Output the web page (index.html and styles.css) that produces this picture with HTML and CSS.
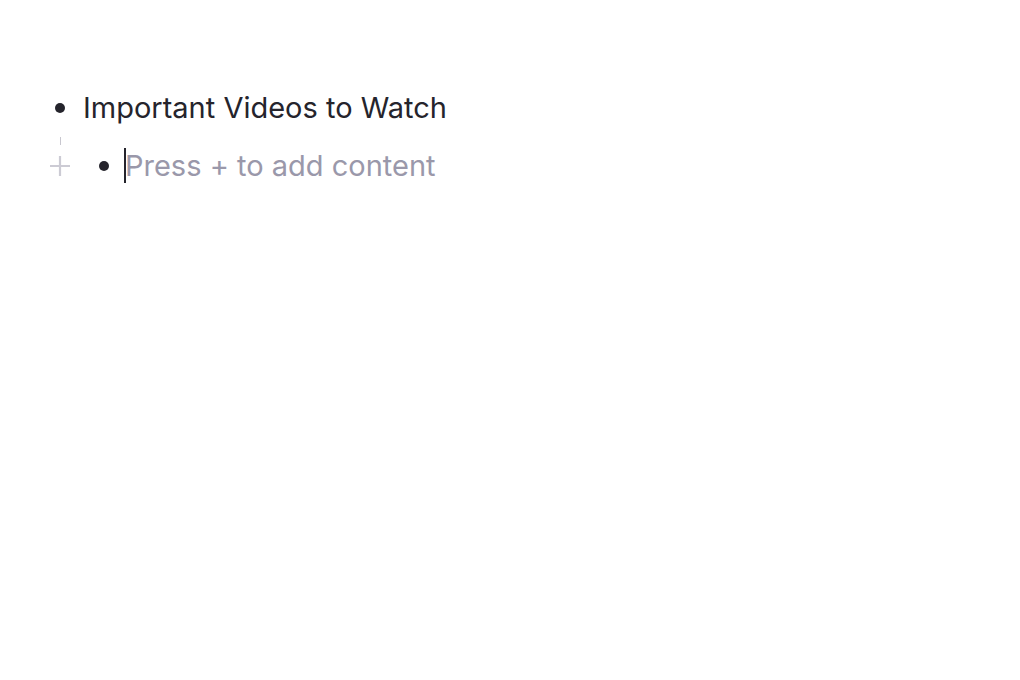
FILE: index.html
```html
<!DOCTYPE html>
<html>
<head>
<meta charset="utf-8">
<link rel="stylesheet" href="styles.css">
</head>
<body>
<div class="editor">
  <div class="row">
    <span class="bullet"></span>
    <span class="text">Important Videos to Watch</span>
  </div>
  <div class="row child">
    <div class="handle">
      <span class="tick"></span>
      <svg class="plus" width="22" height="22" viewBox="0 0 22 22"><path d="M11 1v20M1 11h20" stroke="#cccbd4" stroke-width="2.2" fill="none"/></svg>
      <span class="tick"></span>
    </div>
    <span class="bullet"></span>
    <span class="text placeholder"><span class="caret"></span>Press + to add content</span>
  </div>
</div>
</body>
</html>
```
FILE: styles.css
```css
html, body {
  margin: 0;
  padding: 0;
  background: #ffffff;
}
body {
  font-family: Inter, "Noto Sans", sans-serif;
  color: #25242c;
}
.editor {
  padding: 88px 0 0 55px;
  display: flex;
  flex-direction: column;
  gap: 18px;
}
.row {
  display: flex;
  align-items: center;
  height: 40px;
}
.bullet {
  width: 10px;
  height: 10px;
  border-radius: 50%;
  background: #25242c;
  flex: none;
}
.text {
  font-size: 29px;
  line-height: 40px;
  margin-left: 18px;
  letter-spacing: 0;
}
.child {
  position: relative;
  padding-left: 44px;
}
.handle {
  position: absolute;
  left: -6px;
  top: -9px;
  width: 22px;
  height: 58px;
  display: flex;
  flex-direction: column;
  align-items: center;
  justify-content: space-between;
}
.tick {
  width: 1px;
  height: 8px;
  background: #c8c7cf;
}
.plus {
  display: block;
}
.placeholder {
  color: #9a98aa;
  position: relative;
  margin-left: 16px;
}
.caret {
  position: absolute;
  left: -1px;
  top: 2px;
  width: 2px;
  height: 35px;
  background: #25242c;
}
```
